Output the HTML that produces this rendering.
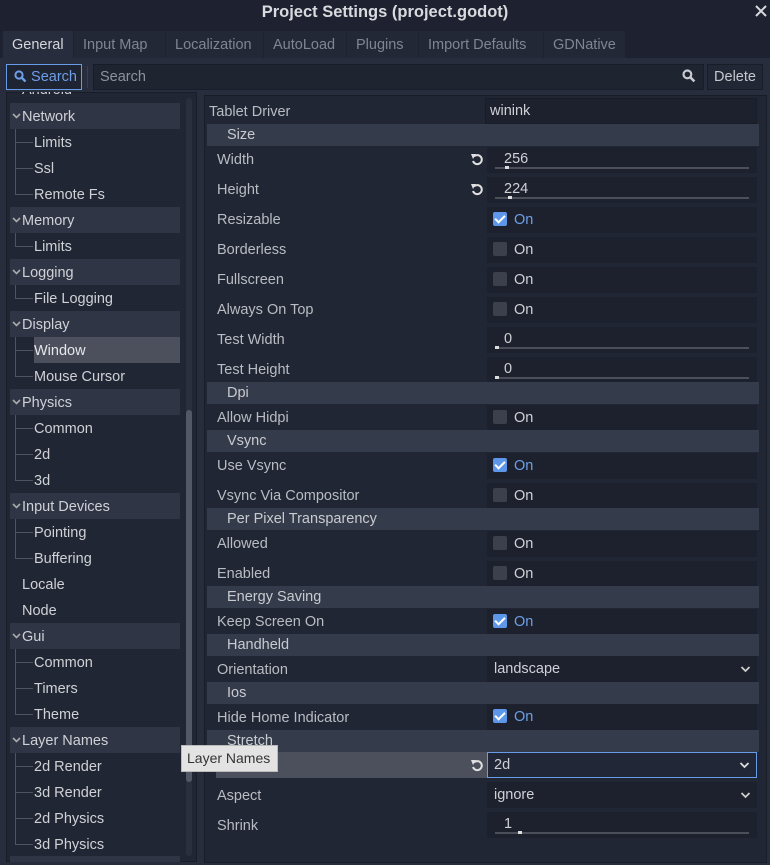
<!DOCTYPE html>
<html><head><meta charset="utf-8"><style>
*{margin:0;padding:0;box-sizing:border-box}
body{width:770px;height:865px;background:#1e2230;font-family:"Liberation Sans","DejaVu Sans",sans-serif;font-size:14px;color:#c6c8cd;position:relative;overflow:hidden}
.a{position:absolute;white-space:nowrap}
.title{left:0;width:770px;top:3px;text-align:center;font-weight:bold;font-size:16.5px;color:#d8dade}
.tab{top:31px;height:27px;color:#80858f;padding:6px 9px 0;font-size:14.5px;background:#232837}
.panel{left:0;top:58px;width:770px;height:807px;background:#272d3c}
.tree{left:6px;top:92px;width:191px;height:770px;background:#212634;border:1px solid #191d28}
.insp{left:204px;top:95px;width:563px;height:768px;background:#212634;border:1px solid #191d28}
.ti{height:26px;line-height:28px;color:#cfd1d5;font-size:14.5px}
.hd{background:#2f3545}
.sec{left:207px;width:552px;height:22px;line-height:22px;background:#343b4a;padding-left:20px;color:#c9cbd0;font-size:14.5px}
.lb{left:217px;color:#b9bcc2;font-size:14.5px;margin-top:2px}
.vb{left:487px;width:270px;height:26px;background:#1d212d;padding-left:4px;line-height:26px;color:#cfd1d5;font-size:14.5px}
.cb{display:inline-block;width:14px;height:14px;border-radius:2px;background:#3b404c;vertical-align:-2px;margin:0 7px 0 2px}
.cbo{background:#5e97ea;position:relative}
.cbo:after{content:"";position:absolute;left:4px;top:1px;width:4px;height:8px;border:solid #fff;border-width:0 2px 2px 0;transform:rotate(45deg)}
.on{color:#6d9fe8}
.sl{position:absolute;left:8px;right:8px;bottom:4px;height:2px;background:#4a4f5a}
.sl i{position:absolute;top:-1px;width:4px;height:3px;background:#ddd}
.rs{left:470px;width:14px;height:14px}
.ln{position:absolute;background:#4e5360}
.hl{position:absolute;left:15px;width:18px;height:1px;background:#4e5360}
.ar{display:inline-block;width:11px;height:8px;vertical-align:1px}
.dd{position:absolute;right:6px;top:9px}
</style></head><body>
<div class="a title">Project Settings (project.godot)</div>
<svg class="a" style="left:755px;top:5px" width="12" height="12" viewBox="0 0 12 12"><path d="M1 1L11 11M11 1L1 11" stroke="#d8dade" stroke-width="2"/></svg>
<div class="a panel"></div>
<div class="a tab" style="left:3px;width:70px;background:#272d3c;color:#d4d6da">General</div>
<div class="a tab" style="left:74px;width:91px">Input Map</div>
<div class="a tab" style="left:166px;width:97px">Localization</div>
<div class="a tab" style="left:264px;width:82px">AutoLoad</div>
<div class="a tab" style="left:347px;width:71px">Plugins</div>
<div class="a tab" style="left:419px;width:124px">Import Defaults</div>
<div class="a tab" style="left:544px;width:81px">GDNative</div>

<div class="a" style="left:6px;top:64px;width:76px;height:26px;border:1px solid #699ce8;background:#1f2433;color:#6d9fe8;line-height:24px;padding-left:7px;font-size:14.5px"><svg width="13" height="13" viewBox="0 0 13 13" style="vertical-align:-2px"><circle cx="5" cy="5" r="3.6" stroke="#6d9fe8" stroke-width="2" fill="none"/><path d="M7.5 7.5L11.5 11.5" stroke="#6d9fe8" stroke-width="2.4"/></svg> Search</div>
<div class="a" style="left:87px;top:66px;width:1px;height:22px;background:#3a4050"></div>
<div class="a" style="left:93px;top:64px;width:611px;height:26px;background:#1f2431;border:1px solid #191d28;color:#8d929c;line-height:24px;padding-left:6px;font-size:14.5px">Search</div>
<svg class="a" style="left:682px;top:69px" width="14" height="14" viewBox="0 0 13 13"><circle cx="5" cy="5" r="3.6" stroke="#c8cacf" stroke-width="2" fill="none"/><path d="M7.5 7.5L11.5 11.5" stroke="#c8cacf" stroke-width="2.4"/></svg>
<div class="a" style="left:707px;top:64px;width:56px;height:26px;background:#222736;border:1px solid #191d28;line-height:24px;text-align:center;color:#c6c8cd;font-size:14.5px">Delete</div>

<div class="a tree"></div>
<div class="a" style="left:186px;top:98px;width:6px;height:758px;background:#2a2f3d;border-radius:3px"></div>
<div class="a" style="left:186px;top:410px;width:6px;height:372px;background:#525866;border-radius:3px"></div>
<div style="position:absolute;left:6px;top:92px;width:180px;height:770px;overflow:hidden">
<div class="a ti" style="left:16px;top:-16px">Android</div>
</div>
<div class="ln" style="left:15px;top:128px;width:1px;height:66px"></div>
<div class="ln" style="left:15px;top:232px;width:1px;height:14px"></div>
<div class="ln" style="left:15px;top:284px;width:1px;height:14px"></div>
<div class="ln" style="left:15px;top:336px;width:1px;height:40px"></div>
<div class="ln" style="left:15px;top:414px;width:1px;height:66px"></div>
<div class="ln" style="left:15px;top:518px;width:1px;height:40px"></div>
<div class="ln" style="left:15px;top:648px;width:1px;height:66px"></div>
<div class="ln" style="left:15px;top:752px;width:1px;height:92px"></div>
<div class="hl" style="top:142px"></div><div class="hl" style="top:168px"></div><div class="hl" style="top:194px"></div>
<div class="hl" style="top:246px"></div><div class="hl" style="top:298px"></div>
<div class="hl" style="top:350px"></div><div class="hl" style="top:376px"></div>
<div class="hl" style="top:428px"></div><div class="hl" style="top:454px"></div><div class="hl" style="top:480px"></div>
<div class="hl" style="top:532px"></div><div class="hl" style="top:558px"></div>
<div class="hl" style="top:662px"></div><div class="hl" style="top:688px"></div><div class="hl" style="top:714px"></div>
<div class="hl" style="top:766px"></div><div class="hl" style="top:792px"></div><div class="hl" style="top:818px"></div><div class="hl" style="top:844px"></div>
<div class="a hd" style="left:10px;top:103px;width:170px;height:26px"></div>
<div class="a hd" style="left:10px;top:207px;width:170px;height:26px"></div>
<div class="a hd" style="left:10px;top:259px;width:170px;height:26px"></div>
<div class="a hd" style="left:10px;top:311px;width:170px;height:26px"></div>
<div class="a hd" style="left:10px;top:389px;width:170px;height:26px"></div>
<div class="a hd" style="left:10px;top:493px;width:170px;height:26px"></div>
<div class="a hd" style="left:10px;top:623px;width:170px;height:26px"></div>
<div class="a hd" style="left:10px;top:727px;width:170px;height:26px"></div>
<div class="a hd" style="left:10px;top:856px;width:170px;height:6px"></div>
<div class="a" style="left:34px;top:337px;width:146px;height:26px;background:#4b505c"></div>

<div class="a ti" style="left:11px;top:103px"><svg class="ar" viewBox="0 0 11 8"><path d="M2 2L5.5 5.5L9 2" stroke="#aaa" stroke-width="1.6" fill="none"/></svg>Network</div>
<div class="a ti" style="left:34px;top:129px">Limits</div>
<div class="a ti" style="left:34px;top:155px">Ssl</div>
<div class="a ti" style="left:34px;top:181px">Remote Fs</div>
<div class="a ti" style="left:11px;top:207px"><svg class="ar" viewBox="0 0 11 8"><path d="M2 2L5.5 5.5L9 2" stroke="#aaa" stroke-width="1.6" fill="none"/></svg>Memory</div>
<div class="a ti" style="left:34px;top:233px">Limits</div>
<div class="a ti" style="left:11px;top:259px"><svg class="ar" viewBox="0 0 11 8"><path d="M2 2L5.5 5.5L9 2" stroke="#aaa" stroke-width="1.6" fill="none"/></svg>Logging</div>
<div class="a ti" style="left:34px;top:285px">File Logging</div>
<div class="a ti" style="left:11px;top:311px"><svg class="ar" viewBox="0 0 11 8"><path d="M2 2L5.5 5.5L9 2" stroke="#aaa" stroke-width="1.6" fill="none"/></svg>Display</div>
<div class="a ti" style="left:34px;top:337px;color:#e6e7ea">Window</div>
<div class="a ti" style="left:34px;top:363px">Mouse Cursor</div>
<div class="a ti" style="left:11px;top:389px"><svg class="ar" viewBox="0 0 11 8"><path d="M2 2L5.5 5.5L9 2" stroke="#aaa" stroke-width="1.6" fill="none"/></svg>Physics</div>
<div class="a ti" style="left:34px;top:415px">Common</div>
<div class="a ti" style="left:34px;top:441px">2d</div>
<div class="a ti" style="left:34px;top:467px">3d</div>
<div class="a ti" style="left:11px;top:493px"><svg class="ar" viewBox="0 0 11 8"><path d="M2 2L5.5 5.5L9 2" stroke="#aaa" stroke-width="1.6" fill="none"/></svg>Input Devices</div>
<div class="a ti" style="left:34px;top:519px">Pointing</div>
<div class="a ti" style="left:34px;top:545px">Buffering</div>
<div class="a ti" style="left:22px;top:571px">Locale</div>
<div class="a ti" style="left:22px;top:597px">Node</div>
<div class="a ti" style="left:11px;top:623px"><svg class="ar" viewBox="0 0 11 8"><path d="M2 2L5.5 5.5L9 2" stroke="#aaa" stroke-width="1.6" fill="none"/></svg>Gui</div>
<div class="a ti" style="left:34px;top:649px">Common</div>
<div class="a ti" style="left:34px;top:675px">Timers</div>
<div class="a ti" style="left:34px;top:701px">Theme</div>
<div class="a ti" style="left:11px;top:727px"><svg class="ar" viewBox="0 0 11 8"><path d="M2 2L5.5 5.5L9 2" stroke="#aaa" stroke-width="1.6" fill="none"/></svg>Layer Names</div>
<div class="a ti" style="left:34px;top:753px">2d Render</div>
<div class="a ti" style="left:34px;top:779px">3d Render</div>
<div class="a ti" style="left:34px;top:805px">2d Physics</div>
<div class="a ti" style="left:34px;top:831px">3d Physics</div>

<div class="a insp"></div>
<div class="a lb" style="left:209px;top:102px">Tablet Driver</div>
<div class="a vb" style="left:485px;top:98px;width:272px;border:1px solid #191d28;line-height:24px">winink</div>
<div class="a sec" style="top:124px">Size</div>

<div class="a lb" style="top:150px">Width</div>
<svg class="a rs" style="top:152px" viewBox="0 0 14 14"><path d="M4 4.5A4.5 4.5 0 1 1 3 9" stroke="#e0e0e0" stroke-width="2" fill="none"/><path d="M1 2L6 2L3 7Z" fill="#e0e0e0"/></svg>
<div class="a vb" style="top:147px;padding-left:17px;line-height:24px">256<div class="sl"><i style="left:10px"></i></div></div>
<div class="a lb" style="top:180px">Height</div>
<svg class="a rs" style="top:182px" viewBox="0 0 14 14"><path d="M4 4.5A4.5 4.5 0 1 1 3 9" stroke="#e0e0e0" stroke-width="2" fill="none"/><path d="M1 2L6 2L3 7Z" fill="#e0e0e0"/></svg>
<div class="a vb" style="top:177px;padding-left:17px;line-height:24px">224<div class="sl"><i style="left:13px"></i></div></div>
<div class="a lb" style="top:210px">Resizable</div><div class="a vb" style="top:207px"><span class="cb cbo"></span><span class="on">On</span></div>
<div class="a lb" style="top:240px">Borderless</div><div class="a vb" style="top:237px"><span class="cb"></span>On</div>
<div class="a lb" style="top:270px">Fullscreen</div><div class="a vb" style="top:267px"><span class="cb"></span>On</div>
<div class="a lb" style="top:300px">Always On Top</div><div class="a vb" style="top:297px"><span class="cb"></span>On</div>
<div class="a lb" style="top:330px">Test Width</div><div class="a vb" style="top:327px;padding-left:17px;line-height:24px">0<div class="sl"><i style="left:0"></i></div></div>
<div class="a lb" style="top:360px">Test Height</div><div class="a vb" style="top:357px;padding-left:17px;line-height:24px">0<div class="sl"><i style="left:0"></i></div></div>
<div class="a sec" style="top:382px">Dpi</div>
<div class="a lb" style="top:408px">Allow Hidpi</div><div class="a vb" style="top:405px"><span class="cb"></span>On</div>
<div class="a sec" style="top:430px">Vsync</div>
<div class="a lb" style="top:456px">Use Vsync</div><div class="a vb" style="top:453px"><span class="cb cbo"></span><span class="on">On</span></div>
<div class="a lb" style="top:486px">Vsync Via Compositor</div><div class="a vb" style="top:483px"><span class="cb"></span>On</div>
<div class="a sec" style="top:508px">Per Pixel Transparency</div>
<div class="a lb" style="top:534px">Allowed</div><div class="a vb" style="top:531px"><span class="cb"></span>On</div>
<div class="a lb" style="top:564px">Enabled</div><div class="a vb" style="top:561px"><span class="cb"></span>On</div>
<div class="a sec" style="top:586px">Energy Saving</div>
<div class="a lb" style="top:612px">Keep Screen On</div><div class="a vb" style="top:609px"><span class="cb cbo"></span><span class="on">On</span></div>
<div class="a sec" style="top:634px">Handheld</div>
<div class="a lb" style="top:660px">Orientation</div><div class="a vb" style="top:656px;padding-left:7px">landscape<svg class="dd" width="11" height="8" viewBox="0 0 11 8"><path d="M1.5 2L5.5 6L9.5 2" stroke="#ccc" stroke-width="1.8" fill="none"/></svg></div>
<div class="a sec" style="top:682px">Ios</div>
<div class="a lb" style="top:708px">Hide Home Indicator</div><div class="a vb" style="top:704px"><span class="cb cbo"></span><span class="on">On</span></div>
<div class="a sec" style="top:730px">Stretch</div>
<div class="a" style="left:216px;top:752px;width:271px;height:26px;background:#4b505c"></div>
<div class="a lb" style="top:756px">Mode</div>
<svg class="a rs" style="top:758px" viewBox="0 0 14 14"><path d="M4 4.5A4.5 4.5 0 1 1 3 9" stroke="#e0e0e0" stroke-width="2" fill="none"/><path d="M1 2L6 2L3 7Z" fill="#e0e0e0"/></svg>
<div class="a vb" style="top:752px;border:1px solid #699ce8;line-height:24px;background:#222737;padding-left:6px">2d<svg class="dd" style="top:8px" width="11" height="8" viewBox="0 0 11 8"><path d="M1.5 2L5.5 6L9.5 2" stroke="#ddd" stroke-width="1.8" fill="none"/></svg></div>
<div class="a lb" style="top:786px">Aspect</div><div class="a vb" style="top:782px;padding-left:7px">ignore<svg class="dd" width="11" height="8" viewBox="0 0 11 8"><path d="M1.5 2L5.5 6L9.5 2" stroke="#ccc" stroke-width="1.8" fill="none"/></svg></div>
<div class="a lb" style="top:816px">Shrink</div><div class="a vb" style="top:812px;padding-left:17px;line-height:24px">1<div class="sl"><i style="left:23px"></i></div></div>

<div class="a" style="left:181px;top:745px;width:97px;height:27px;background:#e3e3e3;border:1px solid #bbb;color:#333;line-height:25px;padding-left:5px;font-size:14px">Layer Names</div>
</body></html>
